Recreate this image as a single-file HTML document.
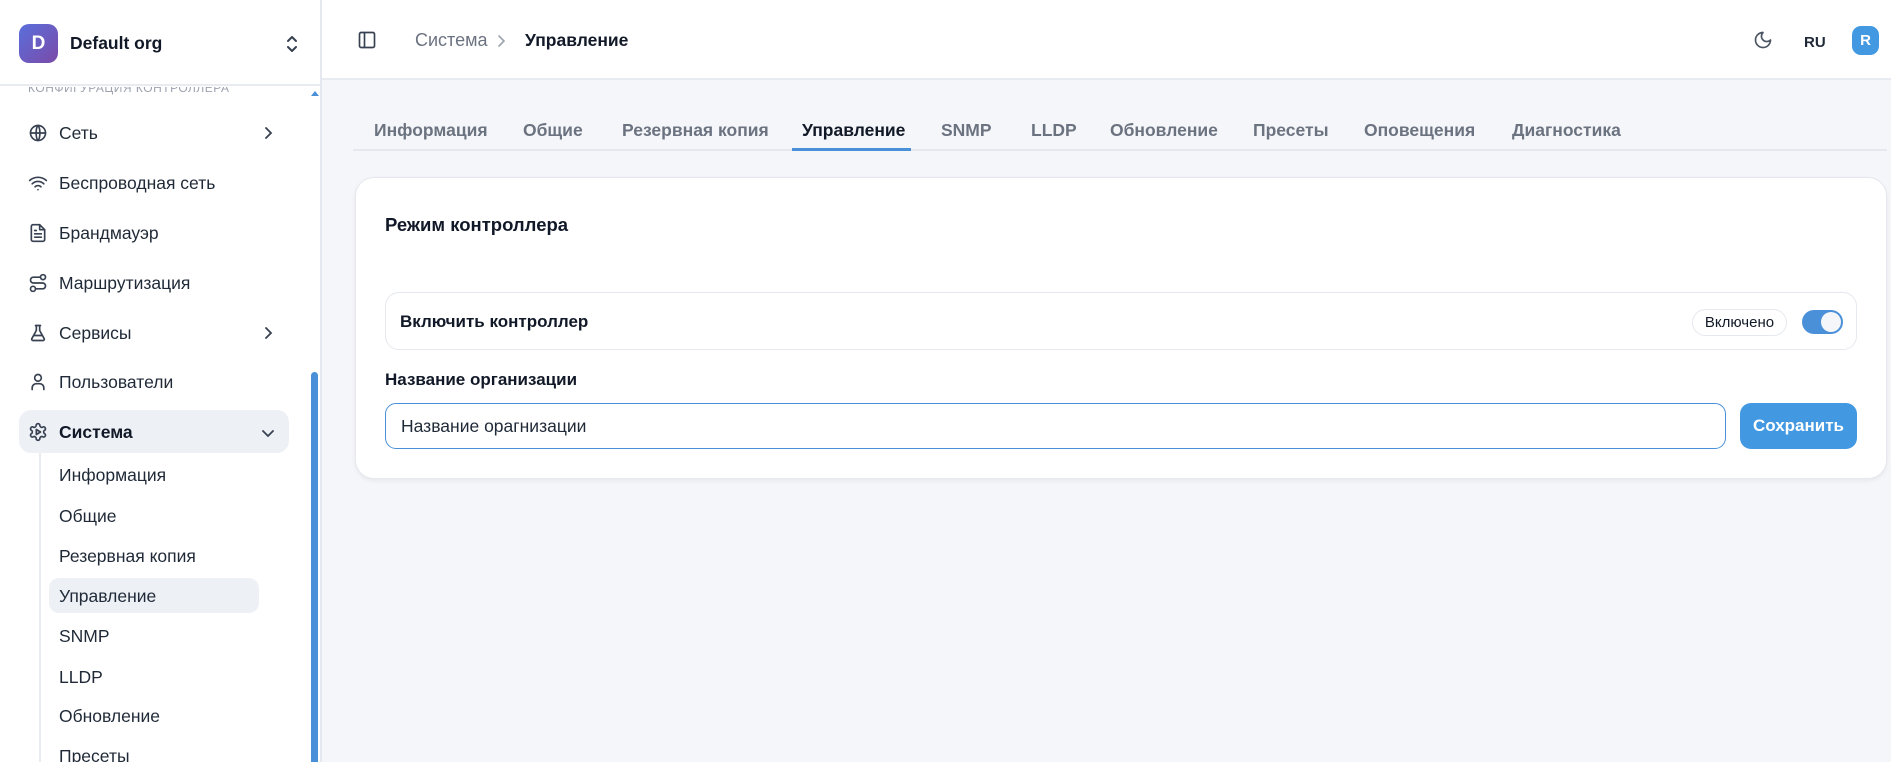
<!DOCTYPE html>
<html><head><meta charset="utf-8">
<style>
*{box-sizing:border-box;margin:0;padding:0}
body{width:1891px;height:762px;overflow:hidden;font-family:"Liberation Sans","DejaVu Sans",sans-serif;background:#f5f6f9;color:#1f2937;position:relative}
.abs{position:absolute}
.side{left:0;top:0;width:322px;height:762px;background:#fff;border-right:2px solid #e5e8ee;overflow:hidden}
.mi{position:absolute;left:28px;font-size:17.5px;color:#1f2937;display:flex;align-items:center;height:30px}
.mi svg{width:20px;height:20px;margin-right:11px;fill:none;stroke:#374151;stroke-width:2;stroke-linecap:round;stroke-linejoin:round}
.chev{position:absolute;left:262px;width:12px;height:12px}
.sub{position:absolute;left:59px;font-size:17.5px;color:#1f2937;height:30px;line-height:30px}
.tab{position:absolute;top:118px;font-size:17.5px;font-weight:bold;color:#6b7280;line-height:24px}
</style></head><body>
<div class="abs side">
  <div class="abs" style="left:19px;top:24px;width:39px;height:39px;border-radius:10px;background:linear-gradient(135deg,#5a6fdc,#7b4aa8);color:#fff;font-size:19px;font-weight:bold;display:flex;align-items:center;justify-content:center">D</div>
  <div class="abs" style="left:70px;top:33px;font-size:17.5px;font-weight:bold;color:#111827">Default org</div>
  <svg class="abs" style="left:284px;top:33px" width="16" height="22" viewBox="0 0 16 22" fill="none" stroke="#374151" stroke-width="2" stroke-linecap="round" stroke-linejoin="round"><path d="M4 8l4-4 4 4M4 14l4 4 4-4"/></svg>
  <div class="abs" style="left:0;top:0;width:320px;height:86px;border-bottom:2px solid #e8ebf0"></div>
  <div class="abs" style="left:28px;top:81px;font-size:12px;color:#9ca3af;letter-spacing:.5px;clip-path:inset(6px 0 0 0)">КОНФИГУРАЦИЯ КОНТРОЛЛЕРА</div>
  <div class="abs" style="left:311px;top:91px;width:0;height:0;border-left:4px solid transparent;border-right:4px solid transparent;border-bottom:5px solid #4a90d9"></div>

  <div class="mi" style="top:118px"><svg viewBox="0 0 24 24"><circle cx="12" cy="12" r="9"/><path d="M3 12h18M12 3c3 3 3 15 0 18M12 3c-3 3-3 15 0 18"/></svg>Сеть</div>
  <svg class="chev" style="top:127px" viewBox="0 0 12 12" fill="none" stroke="#374151" stroke-width="1.8" stroke-linecap="round"><path d="M4 1l5 5-5 5"/></svg>
  <div class="mi" style="top:168px"><svg viewBox="0 0 24 24"><path d="M2 9a15 15 0 0 1 20 0M5 13a10 10 0 0 1 14 0M8.5 16.5a5 5 0 0 1 7 0M12 20h.01"/></svg>Беспроводная сеть</div>
  <div class="mi" style="top:218px"><svg viewBox="0 0 24 24"><path d="M14 2H6a2 2 0 0 0-2 2v16a2 2 0 0 0 2 2h12a2 2 0 0 0 2-2V8z"/><path d="M14 2v6h6M8 13h8M8 17h8M8 9h2"/></svg>Брандмауэр</div>
  <div class="mi" style="top:268px"><svg viewBox="0 0 24 24"><circle cx="6" cy="19" r="3"/><circle cx="18" cy="5" r="3"/><path d="M9 19h8.5a3.5 3.5 0 0 0 0-7h-11a3.5 3.5 0 0 1 0-7H15"/></svg>Маршрутизация</div>
  <div class="mi" style="top:318px"><svg viewBox="0 0 24 24"><path d="M9 3h6M10 3v6L4.5 19a1.5 1.5 0 0 0 1.3 2h12.4a1.5 1.5 0 0 0 1.3-2L14 9V3M7 15h10"/></svg>Сервисы</div>
  <svg class="chev" style="top:327px" viewBox="0 0 12 12" fill="none" stroke="#374151" stroke-width="1.8" stroke-linecap="round"><path d="M4 1l5 5-5 5"/></svg>
  <div class="mi" style="top:367px"><svg viewBox="0 0 24 24"><circle cx="12" cy="7" r="4"/><path d="M5 21v-2a5 5 0 0 1 5-5h4a5 5 0 0 1 5 5v2"/></svg>Пользователи</div>

  <div class="abs" style="left:19px;top:410px;width:270px;height:43px;border-radius:12px;background:#edf1f6"></div>
  <div class="mi" style="top:417px;font-weight:bold;color:#111827"><svg viewBox="0 0 24 24"><path d="M12.2 2h-.4a2 2 0 0 0-2 2v.2a2 2 0 0 1-1 1.7l-.4.3a2 2 0 0 1-2 0l-.2-.1a2 2 0 0 0-2.7.7l-.2.4a2 2 0 0 0 .7 2.7l.2.1a2 2 0 0 1 1 1.7v.5a2 2 0 0 1-1 1.7l-.2.1a2 2 0 0 0-.7 2.7l.2.4a2 2 0 0 0 2.7.7l.2-.1a2 2 0 0 1 2 0l.4.3a2 2 0 0 1 1 1.7v.2a2 2 0 0 0 2 2h.4a2 2 0 0 0 2-2v-.2a2 2 0 0 1 1-1.7l.4-.3a2 2 0 0 1 2 0l.2.1a2 2 0 0 0 2.7-.7l.2-.4a2 2 0 0 0-.7-2.7l-.2-.1a2 2 0 0 1-1-1.7v-.5a2 2 0 0 1 1-1.7l.2-.1a2 2 0 0 0 .7-2.7l-.2-.4a2 2 0 0 0-2.7-.7l-.2.1a2 2 0 0 1-2 0l-.4-.3a2 2 0 0 1-1-1.7V4a2 2 0 0 0-2-2z"/><path d="M10 9l5 3-5 3z"/></svg>Система</div>
  <svg class="chev" style="top:427px" viewBox="0 0 12 12" fill="none" stroke="#374151" stroke-width="1.8" stroke-linecap="round"><path d="M1 4l5 5 5-5"/></svg>

  <div class="abs" style="left:39px;top:453px;width:2px;height:320px;background:#e8ebf0"></div>
  <div class="abs" style="left:49px;top:578px;width:210px;height:35px;border-radius:10px;background:#edf1f6"></div>
  <div class="sub" style="top:460px">Информация</div>
  <div class="sub" style="top:501px">Общие</div>
  <div class="sub" style="top:541px">Резервная копия</div>
  <div class="sub" style="top:581px">Управление</div>
  <div class="sub" style="top:621px">SNMP</div>
  <div class="sub" style="top:662px">LLDP</div>
  <div class="sub" style="top:701px">Обновление</div>
  <div class="sub" style="top:741px">Пресеты</div>
  <div class="abs" style="left:311px;top:372px;width:7px;height:400px;border-radius:4px;background:#4a90d9"></div>
</div>

<div class="abs" style="left:322px;top:0;width:1569px;height:80px;background:#fff;border-bottom:2px solid #e8ebf0"></div>
<svg class="abs" style="left:357px;top:30px" width="20" height="20" viewBox="0 0 24 24" fill="none" stroke="#374151" stroke-width="2" stroke-linejoin="round"><rect x="3" y="3" width="18" height="18" rx="2"/><path d="M9 3v18"/></svg>
<div class="abs" style="left:415px;top:30px;font-size:18px;color:#6b7280">Система</div>
<svg class="abs" style="left:496px;top:34px" width="10" height="14" viewBox="0 0 10 14" fill="none" stroke="#9ca3af" stroke-width="1.6" stroke-linecap="round"><path d="M3 2l5 5-5 5"/></svg>
<div class="abs" style="left:525px;top:30px;font-size:17.5px;font-weight:bold;color:#111827">Управление</div>
<svg class="abs" style="left:1753px;top:30px" width="20" height="20" viewBox="0 0 24 24" fill="none" stroke="#4b5563" stroke-width="2" stroke-linecap="round" stroke-linejoin="round"><path d="M12 3a6 6 0 0 0 9 9 9 9 0 1 1-9-9z"/></svg>
<div class="abs" style="left:1804px;top:34px;font-size:15px;font-weight:bold;color:#1f2937">RU</div>
<div class="abs" style="left:1852px;top:26px;width:27px;height:29px;border-radius:9px;background:#4299e1;color:#fff;font-size:15px;font-weight:bold;display:flex;align-items:center;justify-content:center">R</div>

<div class="abs" style="left:353px;top:149px;width:1534px;height:2px;background:#e5e8ee"></div>
<div class="tab" style="left:374px">Информация</div>
<div class="tab" style="left:523px">Общие</div>
<div class="tab" style="left:622px">Резервная копия</div>
<div class="tab" style="left:802px;color:#111827">Управление</div>
<div class="tab" style="left:941px">SNMP</div>
<div class="tab" style="left:1031px">LLDP</div>
<div class="tab" style="left:1110px">Обновление</div>
<div class="tab" style="left:1253px">Пресеты</div>
<div class="tab" style="left:1364px">Оповещения</div>
<div class="tab" style="left:1512px">Диагностика</div>
<div class="abs" style="left:792px;top:148px;width:119px;height:3px;background:#4a90d9"></div>

<div class="abs" style="left:355px;top:177px;width:1532px;height:302px;background:#fff;border:1px solid #e5e8ee;border-radius:19px;box-shadow:0 2px 4px rgba(0,0,0,.06)"></div>
<div class="abs" style="left:385px;top:214px;font-size:18.5px;font-weight:bold;color:#111827">Режим контроллера</div>
<div class="abs" style="left:385px;top:292px;width:1472px;height:58px;border:1px solid #e5e8ee;border-radius:14px"></div>
<div class="abs" style="left:400px;top:312px;font-size:17px;font-weight:bold;color:#111827">Включить контроллер</div>
<div class="abs" style="left:1692px;top:309px;width:95px;height:27px;border:1px solid #e5e8ee;border-radius:14px;font-size:15px;color:#111827;display:flex;align-items:center;justify-content:center">Включено</div>
<div class="abs" style="left:1802px;top:310px;width:41px;height:24px;border-radius:12px;background:#4a90d9"><div class="abs" style="right:2px;top:2px;width:20px;height:20px;border-radius:50%;background:#f5f6f9"></div></div>
<div class="abs" style="left:385px;top:370px;font-size:17px;font-weight:bold;color:#111827">Название организации</div>
<div class="abs" style="left:385px;top:403px;width:1341px;height:46px;border:1.5px solid #4a90d9;border-radius:11px"></div>
<div class="abs" style="left:401px;top:416px;font-size:17.5px;color:#1f2937">Название орагнизации</div>
<div class="abs" style="left:1740px;top:403px;width:117px;height:46px;border-radius:11px;background:#4299e1;color:#fff;font-size:17px;font-weight:bold;display:flex;align-items:center;justify-content:center">Сохранить</div>
</body></html>
